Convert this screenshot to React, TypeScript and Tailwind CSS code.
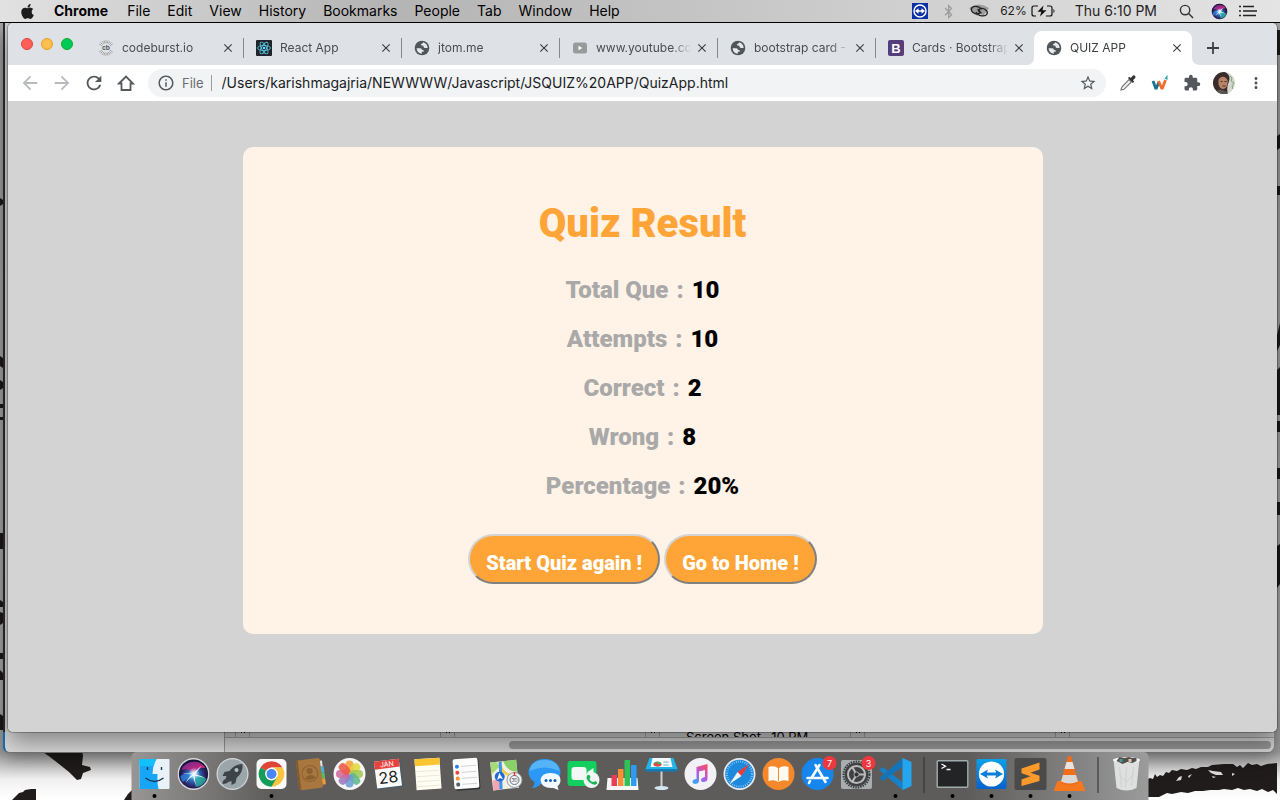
import type { ReactNode } from "react";
import { FaApple, FaBluetoothB } from "react-icons/fa";
import {
  MdArrowBack,
  MdArrowForward,
  MdClose,
  MdExtension,
  MdInfoOutline,
  MdMoreVert,
  MdRefresh,
  MdStarBorder,
} from "react-icons/md";

/* ---------- wallpaper ---------- */

function Wallpaper() {
  return (
    <svg
      className="absolute inset-0 h-full w-full"
      viewBox="0 0 1280 800"
      preserveAspectRatio="none"
      aria-hidden="true"
    >
      <defs>
        <linearGradient id="wall" x1="0" y1="0" x2="0" y2="1">
          <stop offset="0" stopColor="#a9a9a9" />
          <stop offset="0.88" stopColor="#b4b4b4" />
          <stop offset="0.94" stopColor="#a0a0a0" />
          <stop offset="0.975" stopColor="#f1f1f1" />
          <stop offset="1" stopColor="#ffffff" />
        </linearGradient>
      </defs>
      <rect width="1280" height="800" fill="url(#wall)" />
      <g fill="#1f1c1b">
        <path d="M40 750h42l1 6-1 9 8 2 1 3-8 3-2 6-4 1-8-8-10-8-9-7Z" />
        <path d="M12 800l7-7 4-1 2-2 6-1 5 0v11Z" />
        <path d="M124 800l4-6 6-6v12Z" />
        <path d="M1146 780l4-2 3 1 2-5 2 3 3-2 3 1 3-4 3 1 3-3 5 1 4-2 6 1 5-2 4 1 5-2 7 0 4-2 12-1 9 0 4 3 3-2 3 3 5-5 4 2 5-1 4 2 6-2 10-1v31l-4-4-5 2-6-3-5 2-7-2-6 1-6-2-6 2-8-1-5 1-9 0-7 1-8 0-7 2-7-1-9 2-5-1-8 4h-18Z" />
        <path d="M0 198l3 2v4l-3 2ZM0 356l3 2v10l-3-2ZM0 380l3 2v6l-3 2ZM0 404h3v4h-3ZM0 417h3v3h-3ZM0 533h3v16h-3ZM0 600l3 2v5l-3 0ZM0 612l3 1v10l-3 2ZM0 653h3v6h-3ZM0 670l3 3v7h-3ZM0 714l3 2v14h-3Z" />
        <path d="M1277 30h3v25h-3ZM1277 136l3-2v14l-3 2ZM1277 186h3v9h-3ZM1277 335l3-12v22l-3 6ZM1277 370l3-3v48h-3ZM1277 421h3v11h-3ZM1277 468h3v11h-3ZM1277 502h3v13h-3ZM1277 546l3-2v40l-3 4Z" />
      </g>
      <g fill="#dcdcdc">
        <path d="M1176 781l3-4 3-1-1 4ZM1188 776l4-2-3 4ZM1208 770l5 1 8 1 2 3-7 0-5-2ZM1232 773l3 1-3 2ZM1212 776l4 1-3 1Z" />
      </g>
    </svg>
  );
}

/* ---------- menu bar ---------- */

const menus = ["File", "Edit", "View", "History", "Bookmarks", "People", "Tab", "Window", "Help"];

function SiriIcon({ className }: { className: string }) {
  return (
    <svg viewBox="0 0 32 32" className={className} aria-hidden="true">
      <defs>
        <radialGradient id="siriBase" cx="0.5" cy="0.55" r="0.55">
          <stop offset="0" stopColor="#7fd8f5" />
          <stop offset="0.35" stopColor="#2c6fb5" />
          <stop offset="0.7" stopColor="#2a2366" />
          <stop offset="1" stopColor="#0d0d24" />
        </radialGradient>
        <radialGradient id="siriGlow" cx="0.5" cy="0.5" r="0.5">
          <stop offset="0" stopColor="#ffffff" />
          <stop offset="0.4" stopColor="#e8f4ff" stopOpacity="0.7" />
          <stop offset="1" stopColor="#9fd8ff" stopOpacity="0" />
        </radialGradient>
        <linearGradient id="siriPink" x1="0" y1="0" x2="1" y2="1">
          <stop offset="0" stopColor="#6a2a9c" />
          <stop offset="0.6" stopColor="#d0257f" />
          <stop offset="1" stopColor="#ff70b5" />
        </linearGradient>
      </defs>
      <circle cx="16" cy="16" r="16" fill="#d9d9de" />
      <circle cx="16" cy="16" r="14.600" fill="url(#siriBase)" />
      <path d="M4 12C7 3 22 0 28 10 22 9 18 12 17 16 13 12 8 10 4 12Z" fill="url(#siriPink)" opacity="0.9" />
      <path d="M3 18c5-3 9-3 13-1-4 2-8 6-11 7-1-2-2-4-2-6Z" fill="#2d7fe0" opacity="0.8" />
      <path d="M17 17c4 0 8 1 12 4-2 5-7 8-11 8 1-4 1-8-1-12Z" fill="#2cc5a8" opacity="0.7" />
      <circle cx="16.500" cy="15.500" r="6" fill="url(#siriGlow)" />
      <path d="M16 17Q17 13 24 8 20 13 17 16.500 23 17 28 20 21 18 16.800 17.500 18 22 18.500 28 16 22 15.800 17.500 12 20 8 25 11 19 15 16.500 10 15 5 16 11 13.500 16 17Z" fill="#fff" opacity="0.9" />
    </svg>
  );
}

function TeamViewerIcon({ className }: { className: string }) {
  return (
    <svg viewBox="0 0 32 32" className={className} aria-hidden="true">
      <defs>
        <linearGradient id="tv" x1="0" y1="0" x2="0" y2="1">
          <stop offset="0" stopColor="#0ca0e8" />
          <stop offset="1" stopColor="#0562ce" />
        </linearGradient>
      </defs>
      <rect x="1" y="1" width="30" height="30" rx="1.500" fill="url(#tv)" />
      <circle cx="16" cy="16" r="12.600" fill="#fff" />
      <path d="M4.500 16l8-4.500-1.200 3h9.400l-1.200-3 8 4.500-8 4.500 1.200-3h-9.400l1.200 3Z" fill="#0d7fd8" />
    </svg>
  );
}

function MenuBar() {
  return (
    <header className="relative z-10 flex h-[23px] shrink-0 items-center justify-between border-b border-black bg-linear-to-r from-[#e2e2e2] via-[#b5b4b4] via-30% to-[#e4e4e4] pr-[23px] pl-[20px] font-['Inter',sans-serif] text-sm leading-5 text-black">
      <nav aria-label="Application menu" className="flex items-center">
        <button aria-label="Apple" className="mr-[19px]">
          <FaApple className="h-[17px] w-[15px] text-[#1c1c1c]" />
        </button>
        <button className="mr-[19px] font-bold">Chrome</button>
        <div className="flex gap-[17px]">
          {menus.map((m) => (
            <button key={m}>{m}</button>
          ))}
        </div>
      </nav>
      <div className="flex items-center text-[#1f1f1f]">
        <svg viewBox="0 0 16 16" className="size-4" aria-hidden="true">
          <rect width="16" height="16" fill="#0b2fa6" />
          <circle cx="8" cy="8" r="6" fill="none" stroke="#fff" strokeWidth="1.500" />
          <path d="M3 8l3.500-2.800v2h3v-2L13 8l-3.500 2.800v-2h-3v2Z" fill="#fff" />
        </svg>
        <FaBluetoothB className="ml-[13px] size-[15px] text-[#9b9b9b]" />
        <svg viewBox="0 0 20 14" className="ml-[13px] h-[14px] w-5" aria-hidden="true">
          <path d="M0 4Q10-3 20 4L14 12Q12 8 8 12Z" fill="#9c9c9c" />
          <g fill="none" stroke="#222" strokeWidth="1.300">
            <path d="M12.500 5.500C10 1.500 3.500 1.500 2.500 4.500S5.500 10.500 9 9.800C12 9 11.500 6 8.500 5.500" />
            <path d="M7 8c2 4.500 9.500 5 11 2S15 3.500 11.500 4.500C8.500 5.500 9 8.500 12.500 9" />
          </g>
        </svg>
        <span className="ml-[11px] text-xs">62%</span>
        <svg viewBox="0 0 24 12" className="ml-[4px] h-3 w-6" aria-hidden="true">
          <path d="M7 1H3Q1 1 1 3v6q0 2 2 2h2M16 1h3q2 0 2 2v6q0 2-2 2h-4" fill="none" stroke="#111" strokeWidth="1.200" />
          <path d="M12.500 0.500L6.500 6.800h3.700L9 11.500 15.500 5.200h-4Z" fill="#111" />
          <path d="M22.500 4v4q1-.5 1-2t-1-2Z" fill="#111" />
        </svg>
        <span className="ml-[20px]">Thu 6:10 PM</span>
        <svg viewBox="0 0 16 16" className="ml-[22px] size-[15px]" fill="none" stroke="#333" strokeWidth="1.500" aria-hidden="true">
          <circle cx="6.500" cy="6.500" r="5" />
          <path d="M10.200 10.200L15 15" />
        </svg>
        <SiriIcon className="ml-[17px] size-[17px]" />
        <svg viewBox="0 0 18 12" className="ml-[11px] h-3 w-[18px]" aria-hidden="true">
          <path d="M4 1.500h11M4 6h14M4 10.500h13" stroke="#222" strokeWidth="1.600" />
          <path d="M0 1.500h2M0 6h2M0 10.500h2" stroke="#222" strokeWidth="1.600" />
        </svg>
      </div>
    </header>
  );
}

/* ---------- browser window ---------- */

function Globe() {
  return (
    <svg viewBox="0 0 16 16" className="size-4" aria-hidden="true">
      <circle cx="8" cy="8" r="7.300" fill="#50555a" />
      <path
        d="M2.500 8.300h3.800q1.600.2 1.700 1.800h1.600v1.700H7.800v1.900Q3.400 13.600 2.500 8.300ZM9.200 2.300q-.1 1-.9 1.100-1.300.1-1.300 1.300 0 1 1.300.9 1.200 0 1.300 1.200.1 1.300 1.500 1.300h2.500q0-4.400-4.400-5.800Z"
        fill="#e6e9ec"
      />
    </svg>
  );
}

function CodeburstIcon() {
  const rays = Array.from({ length: 24 }, (_, i) => i * 15).filter((a) => a % 180 >= 30 && a % 180 <= 150);
  return (
    <svg viewBox="0 0 16 16" className="size-4" aria-hidden="true">
      {rays.map((a) => (
        <path key={a} d="M12.800 8h3" stroke="#9a9a9a" strokeWidth="0.800" transform={`rotate(${a} 8 8)`} />
      ))}
      <text x="8" y="10.200" textAnchor="middle" fontFamily="Inter" fontSize="6.500" fontWeight="700" fill="#555">
        cb
      </text>
    </svg>
  );
}

function ReactIcon() {
  return (
    <svg viewBox="0 0 16 16" className="size-4" aria-hidden="true">
      <rect width="16" height="16" rx="1" fill="#20232a" />
      <g fill="none" stroke="#56c5de" strokeWidth="0.900">
        <ellipse cx="8" cy="8" rx="6.500" ry="2.500" />
        <ellipse cx="8" cy="8" rx="6.500" ry="2.500" transform="rotate(60 8 8)" />
        <ellipse cx="8" cy="8" rx="6.500" ry="2.500" transform="rotate(120 8 8)" />
      </g>
      <circle cx="8" cy="8" r="1.300" fill="#61dafb" />
    </svg>
  );
}

function YoutubeIcon() {
  return (
    <svg viewBox="0 0 16 16" className="size-4" aria-hidden="true">
      <rect x="1" y="2.500" width="14" height="11" rx="2.500" fill="#999a9b" />
      <path d="M6.500 5.800v4.400L10.300 8Z" fill="#fff" />
    </svg>
  );
}

function BootstrapIcon() {
  return (
    <svg viewBox="0 0 16 16" className="size-4" aria-hidden="true">
      <rect width="16" height="16" rx="2" fill="#563d7c" />
      <text x="8" y="12.500" textAnchor="middle" fontFamily="Liberation Sans" fontSize="13" fontWeight="700" fill="#fff">
        B
      </text>
    </svg>
  );
}

interface TabInfo {
  title: string;
  icon: ReactNode;
  active?: boolean;
}

const tabs: TabInfo[] = [
  { title: "codeburst.io", icon: <CodeburstIcon /> },
  { title: "React App", icon: <ReactIcon /> },
  { title: "jtom.me", icon: <Globe /> },
  { title: "www.youtube.com", icon: <YoutubeIcon /> },
  { title: "bootstrap card - Google", icon: <Globe /> },
  { title: "Cards · Bootstrap", icon: <BootstrapIcon /> },
  { title: "QUIZ APP", icon: <Globe />, active: true },
];

function Tab({ title, icon, active }: TabInfo) {
  return (
    <div
      className={
        active
          ? "relative flex h-[34px] min-w-0 flex-1 items-center rounded-t-lg bg-white pr-2 pl-3 text-[#3c4043] max-w-[158px]"
          : "flex h-[34px] min-w-0 flex-1 items-center pr-2 pl-3 text-[#4a4d51] max-w-[158px]"
      }
    >
      {active && (
        <svg viewBox="0 0 8 8" className="absolute bottom-0 -left-2 size-2" aria-hidden="true">
          <path d="M8 0v8H0q8 0 8-8Z" fill="#fff" />
        </svg>
      )}
      {active && (
        <svg viewBox="0 0 8 8" className="absolute -right-2 bottom-0 size-2" aria-hidden="true">
          <path d="M0 0v8h8Q0 8 0 0Z" fill="#fff" />
        </svg>
      )}
      <span className="shrink-0">{icon}</span>
      <a
        href="#"
        className="ml-2 min-w-0 flex-1 overflow-hidden mask-r-from-80% text-xs leading-4 whitespace-nowrap"
      >
        {title}
      </a>
      <button aria-label={`Close ${title}`} className="ml-1 shrink-0">
        <MdClose className="size-[14px] text-[#3c4043]" />
      </button>
    </div>
  );
}

function TabStrip() {
  return (
    <div className="flex h-[42px] items-end bg-[#dee1e6] pl-[13px]">
      <div className="mr-[13px] flex h-[42px] items-center gap-2">
        <button aria-label="Close window" className="size-3 rounded-full border border-[#e0443e] bg-[#ff5f57]" />
        <button aria-label="Minimise window" className="size-3 rounded-full border border-[#dea123] bg-[#ffbd4c]" />
        <button aria-label="Zoom window" className="size-3 rounded-full border border-[#12ac28] bg-[#00ca56]" />
      </div>
      <nav aria-label="Tabs" className="flex min-w-0 flex-1 items-center">
        {tabs.map((t, i) => (
          <div key={t.title} className="flex max-w-[158px] min-w-0 flex-1 items-center">
            <Tab {...t} />
            {i < tabs.length - 2 && <span className="h-5 w-px shrink-0 bg-[#84878b]" />}
          </div>
        ))}
        <button aria-label="New tab" className="ml-[14px] shrink-0">
          <svg viewBox="0 0 14 14" className="size-[14px]" aria-hidden="true">
            <path d="M7 1v12M1 7h12" stroke="#3c4043" strokeWidth="1.800" />
          </svg>
        </button>
      </nav>
    </div>
  );
}

function Toolbar() {
  return (
    <div className="flex h-9 items-center bg-white pr-[12px] pl-[11px] text-[#54585d]">
      <div className="flex items-center gap-[10px]">
        <button aria-label="Back" className="text-[#b8babd]">
          <MdArrowBack className="size-[22px]" />
        </button>
        <button aria-label="Forward" className="text-[#b8babd]">
          <MdArrowForward className="size-[22px]" />
        </button>
        <button aria-label="Reload">
          <MdRefresh className="size-[22px]" />
        </button>
        <button aria-label="Home">
          <svg viewBox="0 0 22 22" className="size-[22px]" fill="none" stroke="currentColor" strokeWidth="1.800" aria-hidden="true">
            <path d="M4 11.500L11 4.500l7 7H15.500V18H6.500V11.500Z" />
          </svg>
        </button>
      </div>
      <div className="ml-[11px] flex h-7 min-w-0 flex-1 items-center rounded-full bg-[#f1f3f4] pr-[9px] pl-[9px]">
        <MdInfoOutline className="size-[18px] shrink-0" />
        <span className="ml-[7px] font-['Inter',sans-serif] text-[13px] leading-5 text-[#6a6e73]">File</span>
        <span className="mx-[7px] h-4 w-px bg-[#9a9da1]" />
        <input
          aria-label="Address"
          defaultValue="/Users/karishmagajria/NEWWWW/Javascript/JSQUIZ%20APP/QuizApp.html"
          className="ml-[3px] min-w-0 flex-1 bg-transparent font-['Inter',sans-serif] text-[14px] leading-5 text-[#202124] outline-none"
        />
        <button aria-label="Bookmark this page">
          <MdStarBorder className="size-[18px]" />
        </button>
      </div>
      <div className="ml-[13px] flex items-center gap-[14px]">
        <button aria-label="Colour picker">
          <svg viewBox="0 0 18 18" className="size-[18px]" aria-hidden="true">
            <path d="M2 16l.8-3L10 5.600 12.400 8 5 15.300Z" fill="#eee" stroke="#777" strokeWidth="1.100" />
            <path d="M9 4l1.400-1.200 1.300 1.300L14 1.600q1-.8 2 .3t.2 2L14 6.300l1.200 1.300-1.300 1.300Z" fill="#333" />
          </svg>
        </button>
        <button aria-label="W extension">
          <svg viewBox="0 0 18 18" className="size-[18px]" fill="none" strokeWidth="2.800" strokeLinejoin="bevel" aria-hidden="true">
            <path d="M2 7l3 8 3-7" stroke="#176f91" />
            <path d="M7.500 7l3.500 8 3.500-9" stroke="#f36c2c" />
            <path d="M13.500 4.500L16.500 1v5Z" fill="#24a5aa" />
          </svg>
        </button>
        <button aria-label="Extensions">
          <MdExtension className="size-[18px]" />
        </button>
        <button aria-label="Profile">
          <svg viewBox="0 0 22 22" className="-mx-[2px] size-[22px]" aria-hidden="true">
            <defs>
              <clipPath id="face">
                <circle cx="11" cy="11" r="11" />
              </clipPath>
            </defs>
            <g clipPath="url(#face)">
              <rect width="22" height="22" fill="#d3d9cf" />
              <path d="M0 0h12q6 3 4 9-3 8-1 13H2Q-2 10 0 0Z" fill="#3a2c2a" />
              <path d="M5.500 8q2-4 6-3 4 2 3 6 0 5-4 6-4 0-5-5Z" fill="#b98368" />
              <path d="M7.500 9.500h2M11.500 9.500h2M9.500 14h3" stroke="#4a2c26" />
              <path d="M2 22q3-6 7-4 5 1 6 4Z" fill="#5b5554" />
              <path d="M17 4l2 2-1 3 3 2-2 3 1 3" fill="none" stroke="#89a07c" />
            </g>
          </svg>
        </button>
        <button aria-label="Browser menu">
          <MdMoreVert className="size-[18px]" />
        </button>
      </div>
    </div>
  );
}

/* ---------- quiz page ---------- */

const results = [
  { label: "Total Que", value: "10" },
  { label: "Attempts", value: "10" },
  { label: "Correct", value: "2" },
  { label: "Wrong", value: "8" },
  { label: "Percentage", value: "20%" },
];

const quizButton =
  "h-[50px] rounded-full border-2 border-t-[#d3d3d3] border-r-[#808080] border-b-[#808080] border-l-[#d3d3d3] bg-[#ffa436] px-4 pt-2 text-xl leading-6 font-black text-white whitespace-nowrap";

function QuizPage() {
  return (
    <main className="min-h-0 flex-1 overflow-hidden bg-[#d3d3d3] px-4 pt-[46px] font-['Roboto',sans-serif] font-black">
      <section className="mx-auto flex max-w-[800px] flex-col items-center rounded-[10px] bg-[#fff2e6] pt-[53px] pb-[50px] text-center">
        <h1 className="text-[40px] leading-[48px] font-black text-[#ffa436]">Quiz Result</h1>
        <dl className="mt-[18px] text-2xl leading-[49px]">
          {results.map((r) => (
            <div key={r.label} className="flex justify-center gap-2">
              <dt className="flex gap-2 text-[#a9a9a9]">
                <span>{r.label}</span>
                <span>:</span>
              </dt>
              <dd className="text-black">{r.value}</dd>
            </div>
          ))}
        </dl>
        <div className="mt-[23px] flex gap-1">
          <button className={quizButton}>Start Quiz again !</button>
          <button className={quizButton}>Go to Home !</button>
        </div>
      </section>
    </main>
  );
}

function BrowserWindow() {
  return (
    <div className="absolute top-0 right-[3px] bottom-[68px] left-2 flex flex-col overflow-hidden rounded-t-[5px] rounded-b-[5px] font-['Inter',sans-serif] shadow-[0_0_0_1px_rgba(0,0,0,0.25),0_10px_24px_rgba(0,0,0,0.4)]">
      <TabStrip />
      <Toolbar />
      <QuizPage />
    </div>
  );
}

/* ---------- window behind the browser ---------- */

function FileWindow() {
  return (
    <div className="absolute top-0 right-[6px] bottom-12 left-[3px] flex flex-col justify-end rounded-b-[6px] border-l-2 border-[#2b2b2b] bg-[#d0d0d0] font-['Inter',sans-serif] shadow-[0_1px_0_#777,0_8px_18px_rgba(0,0,0,0.3)]">
      <div className="flex h-5">
        <div className="-ml-[2px] w-[222px] shrink-0 rounded-bl-[6px] border-r border-l-2 border-r-[#929292] border-l-[#1774bd] bg-[#dadada]" />
        <div className="min-w-0 flex-1">
          <div className="flex h-[6px] overflow-hidden border-b border-[#9b9b9b] bg-[#c4c4c4]">
            {["a", "b", "c", "d", "e"].map((k) => (
              <div key={k} className="w-[205px] shrink-0 pl-[10px]">
                <span className="flex h-[6px] w-[15px] justify-center gap-[2px] border-x border-[#999]">
                  <span className="size-px bg-black" />
                  <span className="size-px bg-black" />
                </span>
              </div>
            ))}
          </div>
          <div className="flex h-[13px] items-center pr-[3px]">
            <span className="ml-[284px] h-2 flex-1 rounded-full bg-[#939393]" />
          </div>
        </div>
      </div>
      <div className="absolute right-0 bottom-[15px] left-[681px] h-[5px] w-[130px] overflow-hidden text-[13px] leading-[10px] whitespace-nowrap text-black">
        Screen Shot...10 PM
      </div>
    </div>
  );
}

/* ---------- dock ---------- */

function Art({ children }: { children: ReactNode }) {
  return (
    <svg viewBox="0 0 32 32" className="size-8 overflow-visible" aria-hidden="true">
      {children}
    </svg>
  );
}

const petals = ["#f7a13a", "#e3d73f", "#a3c854", "#5fb88b", "#6a9ed4", "#9a78bd", "#cf6a9e", "#ee5948"];

interface DockApp {
  name: string;
  art: ReactNode;
  running?: boolean;
  badge?: string;
}

const apps: DockApp[] = [
  {
    name: "Finder",
    running: true,
    art: (
      <Art>
        <rect x="1" y="1" width="30" height="30" rx="1" fill="#e9f1f9" />
        <path d="M1 1h17q-4 7-4 15h5q-.5 8 1 15H1Z" fill="#17a6f5" />
        <path d="M1 1h17q-2 3-3 7H1Z" fill="#12c1fb" />
        <path d="M9 9v3M23 9v3" stroke="#1b3553" strokeWidth="1.400" />
        <path d="M7 20q9 7 18 0" fill="none" stroke="#1b3553" strokeWidth="1.400" />
      </Art>
    ),
  },
  { name: "Siri", art: <SiriIcon className="size-8" /> },
  {
    name: "Launchpad",
    art: (
      <Art>
        <circle cx="16" cy="16" r="16" fill="#d3d7d9" />
        <circle cx="16" cy="16" r="14.800" fill="#9ba6ac" />
        <path d="M26 6q-8 0-13 7l-5 1-2 4 4 0-1 3 3 3 3-1 0 4 4-2 1-5q7-6 6-14Z" fill="#3c4449" />
        <circle cx="20" cy="12" r="2" fill="#b4bec3" />
        <path d="M9 21q-3 1-3 5 4 0 6-2Z" fill="#3c4449" />
      </Art>
    ),
  },
  {
    name: "Chrome",
    running: true,
    art: (
      <Art>
        <rect x="1" y="1" width="30" height="30" rx="5" fill="#fafafa" />
        <path d="M16 16L5 9.600A12.700 12.700 0 0 1 27 9.600H16Z" fill="#df4438" />
        <path d="M16 16v12.700A12.700 12.700 0 0 0 27 9.600H16Z" fill="#fdc43f" />
        <path d="M16 16L5 9.600A12.700 12.700 0 0 0 16 28.700L21.600 19Z" fill="#149d58" />
        <circle cx="16" cy="16" r="6.400" fill="#fff" />
        <circle cx="16" cy="16" r="5" fill="#4687f4" />
      </Art>
    ),
  },
  {
    name: "Contacts",
    art: (
      <Art>
        <g transform="rotate(-7 16 16)">
          <path d="M26 4h3v6h-3Z" fill="#e6e6e6" />
          <path d="M26 10h4v6h-4Z" fill="#49b1d9" />
          <path d="M26 16h4v6h-4Z" fill="#5bbd63" />
          <path d="M26 22h4v6h-4Z" fill="#f19b38" />
          <rect x="3" y="1" width="24" height="30" rx="2" fill="#a8773f" />
          <path d="M3 3q0-2 2-2v30q-2 0-2-2Z" fill="#855a2c" />
          <circle cx="15.500" cy="15.500" r="8" fill="none" stroke="#8a6030" />
          <circle cx="15.500" cy="13" r="3" fill="#8a6030" />
          <path d="M10 20q5-6 11 0-5 4-11 0Z" fill="#8a6030" />
        </g>
      </Art>
    ),
  },
  {
    name: "Photos",
    art: (
      <Art>
        <circle cx="16" cy="16" r="16" fill="#f6f6f6" />
        {petals.map((c, i) => (
          <rect
            key={c}
            x="12"
            y="2.500"
            width="8"
            height="13"
            rx="4"
            fill={c}
            opacity="0.88"
            transform={`rotate(${i * 45} 16 16)`}
          />
        ))}
      </Art>
    ),
  },
  {
    name: "Calendar",
    art: (
      <Art>
        <g transform="rotate(-7 16 16)">
          <rect x="3" y="3" width="27" height="28" rx="1" fill="#4f5d66" />
          <rect x="3" y="2" width="25" height="27" fill="#fbfbfb" />
          <rect x="3" y="2" width="25" height="8" fill="#e8423f" />
          <text x="15.500" y="8.600" textAnchor="middle" fontFamily="Inter" fontSize="7" fill="#fff">
            JAN
          </text>
          <text x="15.500" y="25" textAnchor="middle" fontFamily="Inter" fontSize="16" fill="#222">
            28
          </text>
        </g>
      </Art>
    ),
  },
  {
    name: "Notes",
    art: (
      <Art>
        <g transform="rotate(-4 16 16)">
          <rect x="4" y="0.500" width="25" height="31" fill="#fffdf2" />
          <rect x="4" y="0.500" width="25" height="7" fill="#fbc532" />
          <path d="M5 13h23M5 18h23M5 23h23M5 28h23" stroke="#e6e4d6" strokeWidth="0.800" />
        </g>
      </Art>
    ),
  },
  {
    name: "Reminders",
    art: (
      <Art>
        <g transform="rotate(-4 16 16)">
          <rect x="4" y="1" width="25" height="31" rx="2" fill="#333" />
          <rect x="3" y="0.500" width="25" height="30" rx="2" fill="#fcfcfc" />
          <path d="M11 8h15M11 14h15M11 20h15M11 26h15" stroke="#c9c9c9" strokeWidth="0.800" />
          <circle cx="7" cy="8" r="2" fill="#2e7cf0" />
          <circle cx="7" cy="14" r="2" fill="#ee433f" />
          <circle cx="7" cy="20" r="2" fill="#f6912f" />
          <circle cx="7" cy="26" r="2" fill="#53606e" />
        </g>
      </Art>
    ),
  },
  {
    name: "Maps",
    art: (
      <Art>
        <g transform="rotate(-6 16 16)">
          <rect x="2" y="3" width="26" height="28" fill="#f3efe2" />
          <path d="M15 3h13v12Q18 14 15 3Z" fill="#8ad06b" />
          <path d="M2 3h6l3 5-9 7Z" fill="#a5d97a" />
          <path d="M3 21h7v10H2Z" fill="#f3a5b4" />
          <path d="M11 3q1 15 17 17" fill="none" stroke="#f3ce52" strokeWidth="2.500" />
          <path d="M12 3l-2 28" stroke="#3a97e8" strokeWidth="3" />
          <circle cx="10" cy="18" r="5" fill="#2269d3" />
          <path d="M10 14l3 7-3-1.500L7 21Z" fill="#fff" />
        </g>
        <circle cx="25" cy="22" r="7.500" fill="#f1f3f5" stroke="#8f9ba4" />
        <circle cx="25" cy="22" r="4.500" fill="none" stroke="#66727b" />
        <path d="M25 14v4" stroke="#e53b36" strokeWidth="1.500" />
        <text x="25" y="23.700" textAnchor="middle" fontFamily="Inter" fontSize="4.500" fill="#444">3D</text>
      </Art>
    ),
  },
  {
    name: "Messages",
    art: (
      <Art>
        <path d="M16 1C7 1 0 7 0 14q0 6 6 10 0 4-3 6 6 0 9-4 20 1 20-12C32 7 25 1 16 1Z" fill="#2a98f4" />
        <path d="M1 13Q3 2 16 2t15 11Q16 6 1 13Z" fill="#55b4f8" />
        <path d="M22 15q10 0 10 7 0 4-3 6l1 4-5-2q-12 1-13-8 1-7 10-7Z" fill="#f2f8ff" />
        <circle cx="17.500" cy="22.500" r="1.500" fill="#175fae" />
        <circle cx="22" cy="22.500" r="1.500" fill="#175fae" />
        <circle cx="26.500" cy="22.500" r="1.500" fill="#175fae" />
      </Art>
    ),
  },
  {
    name: "FaceTime",
    art: (
      <Art>
        <rect x="0" y="3" width="29" height="25" rx="3" fill="#13d05e" />
        <rect x="4" y="9" width="15" height="13" rx="3" fill="#f5f7f6" />
        <path d="M20 14l6-4v12l-6-4Z" fill="#f5f7f6" />
        <circle cx="24" cy="22" r="8" fill="#f2f5f3" />
        <path d="M20 17q2-1 3 2l-1 2q1 3 4 3l2-1q3 2 1 3-2 2-6-1-6-4-3-8Z" fill="#14b655" />
      </Art>
    ),
  },
  {
    name: "Numbers",
    art: (
      <Art>
        <path d="M1 20h30l1 12H0Z" fill="#f6f6f6" />
        <rect x="5" y="17" width="5.500" height="11" fill="#e93e58" />
        <rect x="11.500" y="11" width="5.500" height="17" fill="#f79034" />
        <rect x="18" y="2" width="5.500" height="26" fill="#31c257" />
        <rect x="24.500" y="7" width="5.500" height="21" fill="#2d9cef" />
      </Art>
    ),
  },
  {
    name: "Keynote",
    art: (
      <Art>
        <path d="M15 12h2v19h-2Z" fill="#cbd3d8" />
        <ellipse cx="16" cy="30" rx="7" ry="2" fill="#d4e7f0" />
        <path d="M4 0h24l4 11H0Z" fill="#22b4e8" />
        <path d="M7 0h18l2 9H5Z" fill="#f4f9fb" />
        <path d="M0 11h32v2.500H0Z" fill="#107db4" />
        <ellipse cx="12" cy="6" rx="4" ry="2.500" fill="#37bd67" />
        <path d="M12 3.500v2.500h4q0 2.500-4 2.500t-4-2.500Z" fill="#e2484c" />
        <path d="M18 4h5M18 7h5" stroke="#73abc9" />
      </Art>
    ),
  },
  {
    name: "Music",
    art: (
      <Art>
        <defs>
          <linearGradient id="note" x1="0.800" y1="0" x2="0.200" y2="1">
            <stop offset="0" stopColor="#fb4b68" />
            <stop offset="0.500" stopColor="#b858dd" />
            <stop offset="1" stopColor="#35a8f8" />
          </linearGradient>
        </defs>
        <circle cx="16" cy="16" r="16" fill="#f1f1f6" />
        <path d="M12 9l11-3v14.500q0 3-3.500 3.500-3 0-3-2t4-3v-7l-6 1.500v9q0 3-3.500 3.500-3 0-3-2.500 0-2 4-2.500Z" fill="url(#note)" />
      </Art>
    ),
  },
  {
    name: "Safari",
    art: (
      <Art>
        <circle cx="16" cy="16" r="16" fill="#e5eaf0" />
        <circle cx="16" cy="16" r="14.300" fill="#1d89dd" />
        <circle cx="16" cy="16" r="12.500" fill="none" stroke="#bce3f8" strokeWidth="2" strokeDasharray="0.600 1.600" />
        <path d="M26 6L18 18l-4-4Z" fill="#ed3b37" />
        <path d="M6 26l8-12 4 4Z" fill="#f4f4f4" />
      </Art>
    ),
  },
  {
    name: "Books",
    art: (
      <Art>
        <circle cx="16" cy="16" r="16" fill="#f4882a" />
        <path d="M16 10.500Q12 7 6 9v14q6-2 10 1 4-3 10-1V9q-6-2-10 1.500Z" fill="#fffaf1" />
        <path d="M16 10v13" stroke="#f4882a" />
      </Art>
    ),
  },
  {
    name: "App Store",
    badge: "7",
    art: (
      <Art>
        <circle cx="16" cy="16" r="16" fill="#1686ed" />
        <g stroke="#f5faff" strokeWidth="2.600" strokeLinecap="round">
          <path d="M18 7L10 20M14 7l10 17M6 20h20M8.500 23L7.500 25" />
        </g>
      </Art>
    ),
  },
  {
    name: "System Preferences",
    badge: "3",
    art: (
      <Art>
        <rect x="0.500" y="2" width="31" height="29" rx="2" fill="#a8adb0" />
        <circle cx="16" cy="16.500" r="13" fill="none" stroke="#393c3d" strokeWidth="2" strokeDasharray="1.500 1" />
        <circle cx="16" cy="16.500" r="12" fill="#3f4243" />
        <circle cx="16" cy="16.500" r="8.500" fill="none" stroke="#bbb" strokeWidth="2" />
        <path d="M16 16.500L25 16.500M16 16.500l-4.500 8M16 16.500l-4.500-8" stroke="#bbb" strokeWidth="2" />
        <circle cx="16" cy="16.500" r="2.500" fill="#303233" stroke="#aaa" />
      </Art>
    ),
  },
  {
    name: "Visual Studio Code",
    running: true,
    art: (
      <Art>
        <path d="M0 12l3-3 20 15V32Z" fill="#1481ca" />
        <path d="M0 20l3 3L23 9V0Z" fill="#1375b8" />
        <path d="M23 0l9 4v24l-9 4Z" fill="#23a5f0" />
      </Art>
    ),
  },
];

const utilities: DockApp[] = [
  {
    name: "Terminal",
    running: true,
    art: (
      <Art>
        <rect x="0.700" y="2.700" width="30.600" height="26.600" rx="1" fill="#222426" stroke="#a0acae" strokeWidth="1.400" />
        <path d="M5 6l4 2.300L5 10.500M10 11.500h4" fill="none" stroke="#fff" strokeWidth="1.300" />
      </Art>
    ),
  },
  { name: "TeamViewer", running: true, art: <TeamViewerIcon className="size-8" /> },
  {
    name: "Sublime Text",
    running: true,
    art: (
      <Art>
        <rect width="32" height="32" rx="2" fill="#4a4a4a" />
        <path d="M7 10.500l18-6v7l-9 3.300 9 3v5.200L7 28v-6.500l9-3.200-9-3Z" fill="#fb9a2b" />
      </Art>
    ),
  },
  {
    name: "VLC",
    running: true,
    art: (
      <Art>
        <path d="M4 23h24l4 10H0Z" fill="#f5771e" />
        <path d="M14.500-2h3l7.500 27q-9 5-18 0Z" fill="#f26d19" />
        <path d="M13 4h6l2 7h-10Z" fill="#e6e3e1" />
        <path d="M9.500 17h13l2 6.500q-8.500 4-17 0Z" fill="#d9d6d4" />
      </Art>
    ),
  },
];

const trash: DockApp = {
  name: "Trash",
  art: (
    <Art>
      <path d="M3 1h26l-3 29q-10 5-20 0Z" fill="#dedfdf" />
      <ellipse cx="16" cy="2" rx="13.500" ry="3" fill="#f3f3f3" />
      <path d="M6 3l3-4 5 1 4-1 4 1 4 0v3l-4 2-5-1-5 2Z" fill="#54504e" />
      <path d="M9 1h3v3H9Z" fill="#449a92" />
      <path d="M18 1h3v3h-3Z" fill="#d8cab8" />
      <path d="M9 9l2 20M16 9l-1 20M23 9l-2 19M8 17l8 7 8-9" stroke="#cfd0d1" strokeWidth="1" fill="none" />
    </Art>
  ),
};

function DockItem({ name, art, running, badge }: DockApp) {
  return (
    <button aria-label={name} className="relative flex h-12 w-[39px] shrink-0 flex-col items-center pt-[6px]">
      {art}
      {running && <span className="mt-1 size-1 rounded-full bg-black" />}
      {badge && (
        <span className="absolute top-1 right-0 flex size-[14px] items-center justify-center rounded-full bg-[#f0373d] font-['Inter',sans-serif] text-[9px] leading-none text-white">
          {badge}
        </span>
      )}
    </button>
  );
}

function DockSeparator() {
  return (
    <span className="flex h-12 w-[18px] shrink-0 items-center justify-center pb-0.5">
      <span className="h-9 w-px bg-[#2d2d2d]" />
    </span>
  );
}

function Dock() {
  return (
    <nav
      aria-label="Dock"
      className="absolute bottom-0 left-1/2 flex h-12 -translate-x-1/2 rounded-t-[5px] bg-[linear-gradient(to_right,#989695,#5e5c5b_14%,#5e5c5b_82%,#9b9b9b)] px-[3px]"
    >
      {apps.map((a) => (
        <DockItem key={a.name} {...a} />
      ))}
      <DockSeparator />
      {utilities.map((a) => (
        <DockItem key={a.name} {...a} />
      ))}
      <DockSeparator />
      <DockItem {...trash} />
    </nav>
  );
}

export default function App() {
  return (
    <div className="relative flex h-screen flex-col overflow-hidden bg-white">
      <Wallpaper />
      <MenuBar />
      <div className="relative min-h-0 flex-1">
        <FileWindow />
        <BrowserWindow />
        <Dock />
      </div>
    </div>
  );
}
